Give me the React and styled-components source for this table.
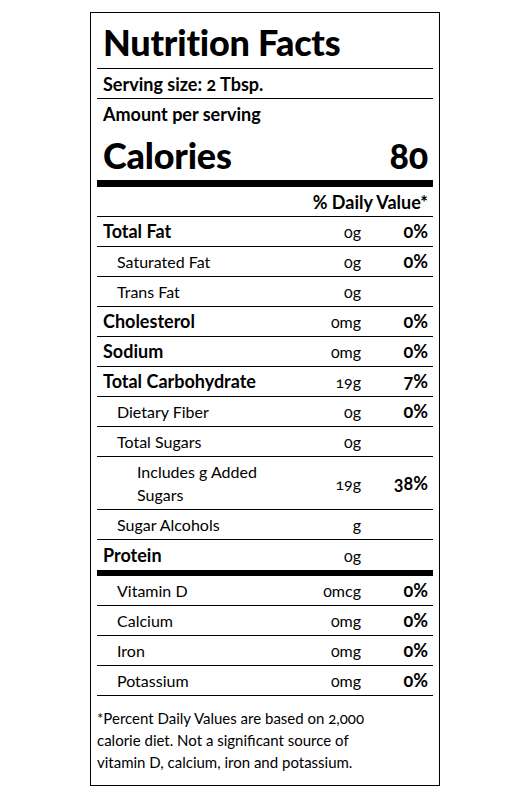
import React from 'react';
import styled, { createGlobalStyle } from 'styled-components';

const GlobalStyle = createGlobalStyle`
    html, body {
        margin: 0;
        padding: 0;
        background: #fff;
    }
    body {
        font-family: Lato, "Open Sans", sans-serif;
        font-variant-numeric: oldstyle-nums;
        font-feature-settings: "onum" 1;
        color: #000;
    }
`;

const Page = styled.div`
    padding: 12px 0 20px 90px;
`;

const Label = styled.section`
    box-sizing: border-box;
    width: 350px;
    border: 1px solid #000;
    padding: 0 6px;
`;

const Title = styled.h1`
    box-sizing: border-box;
    margin: 0;
    height: 56px;
    padding: 11px 6px 0;
    border-bottom: 1px solid #000;
    font-size: 36px;
    line-height: 36px;
    font-weight: 900;
    letter-spacing: -0.2px;
`;

const Line = styled.div`
    box-sizing: border-box;
    display: flex;
    align-items: center;
    justify-content: ${p => p.$align || 'space-between'};
    padding: 0 5px 0 6px;
    height: ${p => p.$height || 30}px;
    border-bottom: ${p => (p.$border ? '1px solid #000' : 'none')};
    font-size: ${p => (p.$big ? 36 : 18)}px;
    font-weight: ${p => (p.$big ? 900 : 700)};
    letter-spacing: ${p => (p.$big ? '-0.2px' : '0')};
`;

const Bar = styled.div`
    height: ${p => p.$size}px;
    background: #000;
`;

const Row = styled.div`
    box-sizing: border-box;
    display: grid;
    grid-template-columns: 1fr 90px 67px;
    align-items: ${p => (p.$tall ? 'center' : 'baseline')};
    align-content: center;
    min-height: 30px;
    padding: ${p => (p.$tall ? '3px' : '0')} 5px ${p => (p.$tall ? '3px' : '0')} 6px;
    border-bottom: ${p => (p.$last ? 'none' : '1px solid #000')};
    font-size: 16px;
    line-height: 23px;
`;

const Name = styled.span`
    padding-left: ${p => p.$level * 14 + (p.$level > 1 ? 6 : 0)}px;
    font-size: ${p => (p.$bold ? 18 : 16)}px;
    font-weight: ${p => (p.$bold ? 700 : 400)};
    max-width: ${p => (p.$level > 1 ? '160px' : 'none')};
`;

const Amount = styled.span`
    text-align: right;
    font-weight: 400;
`;

const Percent = styled.span`
    text-align: right;
    font-size: 18px;
    font-weight: 700;
`;

const Footnote = styled.p`
    margin: 0;
    max-width: 285px;
    padding: 11px 0 12px 0;
    font-size: 15px;
    line-height: 22px;
    font-weight: 400;
`;

const nutrients = [
    { name: 'Total Fat', amount: '0g', dv: '0%', bold: true },
    { name: 'Saturated Fat', amount: '0g', dv: '0%', level: 1 },
    { name: 'Trans Fat', amount: '0g', level: 1 },
    { name: 'Cholesterol', amount: '0mg', dv: '0%', bold: true },
    { name: 'Sodium', amount: '0mg', dv: '0%', bold: true },
    { name: 'Total Carbohydrate', amount: '19g', dv: '7%', bold: true },
    { name: 'Dietary Fiber', amount: '0g', dv: '0%', level: 1 },
    { name: 'Total Sugars', amount: '0g', level: 1 },
    { name: 'Includes g Added Sugars', amount: '19g', dv: '38%', level: 2, tall: true },
    { name: 'Sugar Alcohols', amount: 'g', level: 1 },
    { name: 'Protein', amount: '0g', bold: true, last: true },
];

const vitamins = [
    { name: 'Vitamin D', amount: '0mcg', dv: '0%' },
    { name: 'Calcium', amount: '0mg', dv: '0%' },
    { name: 'Iron', amount: '0mg', dv: '0%' },
    { name: 'Potassium', amount: '0mg', dv: '0%' },
];

const NutrientRow = ({ item }) => (
    <Row $tall={item.tall} $last={item.last}>
        <Name $level={item.level || 0} $bold={item.bold}>{item.name}</Name>
        <Amount>{item.amount}</Amount>
        <Percent>{item.dv}</Percent>
    </Row>
);

const App = () => (
    <Page>
        <GlobalStyle />
        <Label>
            <Title>Nutrition Facts</Title>
            <Line $border>Serving size: 2 Tbsp.</Line>
            <Line>Amount per serving</Line>
            <Line $big $height={51}>
                <span>Calories</span>
                <span>80</span>
            </Line>
            <Bar $size={7} />
            <Line $border $align="flex-end">% Daily Value*</Line>
            {nutrients.map(item => <NutrientRow key={item.name} item={item} />)}
            <Bar $size={6} />
            {vitamins.map(item => (
                <NutrientRow key={item.name} item={{ ...item, level: 1 }} />
            ))}
            <Footnote>
                *Percent Daily Values are based on 2,000 calorie diet. Not a significant
                source of vitamin D, calcium, iron and potassium.
            </Footnote>
        </Label>
    </Page>
);

export default App;
